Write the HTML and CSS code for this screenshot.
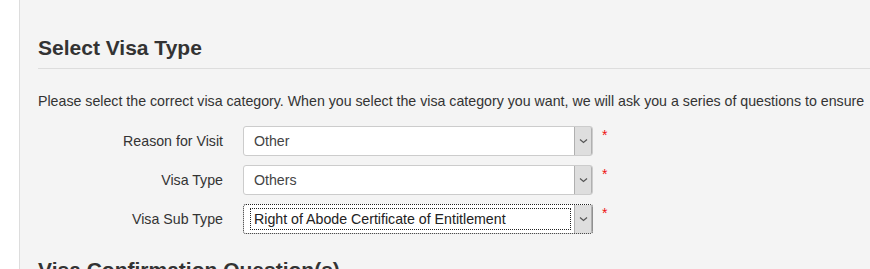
FILE: index.html
```html
<!DOCTYPE html>
<html>
<head>
<meta charset="utf-8">
<link rel="stylesheet" href="styles.css">
</head>
<body>
<div class="page">
  <div class="gutter"></div>
  <div class="panel">
    <h2 class="title">Select Visa Type</h2>
    <div class="rule"></div>
    <p class="intro">Please select the correct visa category. When you select the visa category you want, we will ask you a series of questions to ensure</p>
    <div class="form">
      <div class="row">
        <label class="lbl">Reason for Visit</label>
        <div class="select"><span class="val">Other</span><span class="btn"><svg width="9" height="6" viewBox="0 0 9 6"><path d="M1 1.5 L4.5 4.5 L8 1.5" fill="none" stroke="#555" stroke-width="1.2"/></svg></span></div>
        <span class="req">*</span>
      </div>
      <div class="row">
        <label class="lbl">Visa Type</label>
        <div class="select"><span class="val">Others</span><span class="btn"><svg width="9" height="6" viewBox="0 0 9 6"><path d="M1 1.5 L4.5 4.5 L8 1.5" fill="none" stroke="#555" stroke-width="1.2"/></svg></span></div>
        <span class="req">*</span>
      </div>
      <div class="row">
        <label class="lbl">Visa Sub Type</label>
        <div class="select focused"><span class="val"><span class="focusval">Right of Abode Certificate of Entitlement</span></span><span class="btn"><svg width="9" height="6" viewBox="0 0 9 6"><path d="M1 1.5 L4.5 4.5 L8 1.5" fill="none" stroke="#555" stroke-width="1.2"/></svg></span></div>
        <span class="req">*</span>
      </div>
    </div>
    <h2 class="title second">Visa Confirmation Question(s)</h2>
  </div>
</div>
</body>
</html>
```
FILE: styles.css
```css
html, body {
  margin: 0;
  padding: 0;
  height: 100%;
  overflow: hidden;
  background: #ffffff;
}
.page {
  display: flex;
  height: 269px;
  font-family: "Liberation Sans", Arial, sans-serif;
  color: #333333;
}
.gutter {
  width: 19px;
  flex: none;
  background: #ffffff;
}
.panel {
  flex: 1;
  background: #f4f4f4;
  border-left: 1px solid #dddddd;
  padding: 0 0 0 18px;
  overflow: hidden;
}
.title {
  margin: 0;
  padding-top: 36px;
  font-size: 21px;
  line-height: 24px;
  font-weight: bold;
  color: #333333;
}
.rule {
  margin-top: 8px;
  height: 1px;
  background: #dddddd;
}
.intro {
  margin: 22px 0 0 0;
  font-size: 14.2px;
  line-height: 20px;
  white-space: nowrap;
  color: #333333;
}
.form {
  margin-top: 15px;
  display: flex;
  flex-direction: column;
  gap: 9px;
}
.row {
  display: flex;
  align-items: flex-start;
}
.lbl {
  width: 185px;
  text-align: right;
  font-size: 14.2px;
  line-height: 30px;
  margin-right: 20px;
  color: #333333;
}
.select {
  width: 348px;
  height: 28px;
  border: 1px solid #cccccc;
  border-radius: 3px;
  background: #ffffff;
  display: flex;
  align-items: stretch;
  box-sizing: content-box;
}
.val {
  flex: 1;
  font-size: 14.2px;
  line-height: 28px;
  padding-left: 10px;
  color: #444444;
}
.btn {
  width: 16px;
  background: #dedede;
  border-left: 1px solid #b0b0b0;
  border-right: 1px solid #b0b0b0;
  border-radius: 0 2px 2px 0;
  display: flex;
  align-items: center;
  justify-content: center;
}
.req {
  color: #ee1111;
  font-size: 14px;
  line-height: 13px;
  margin-left: 9px;
  margin-top: 3px;
}
.focused {
  border: 1px dotted #222222;
}
.focused .val {
  padding: 3px 3px 3px 6px;
  line-height: 20px;
}
.focusval {
  display: block;
  border: 1px dotted #222222;
  padding-left: 3px;
  line-height: 20px;
  color: #222222;
}
.second {
  padding-top: 24px;
}
```
